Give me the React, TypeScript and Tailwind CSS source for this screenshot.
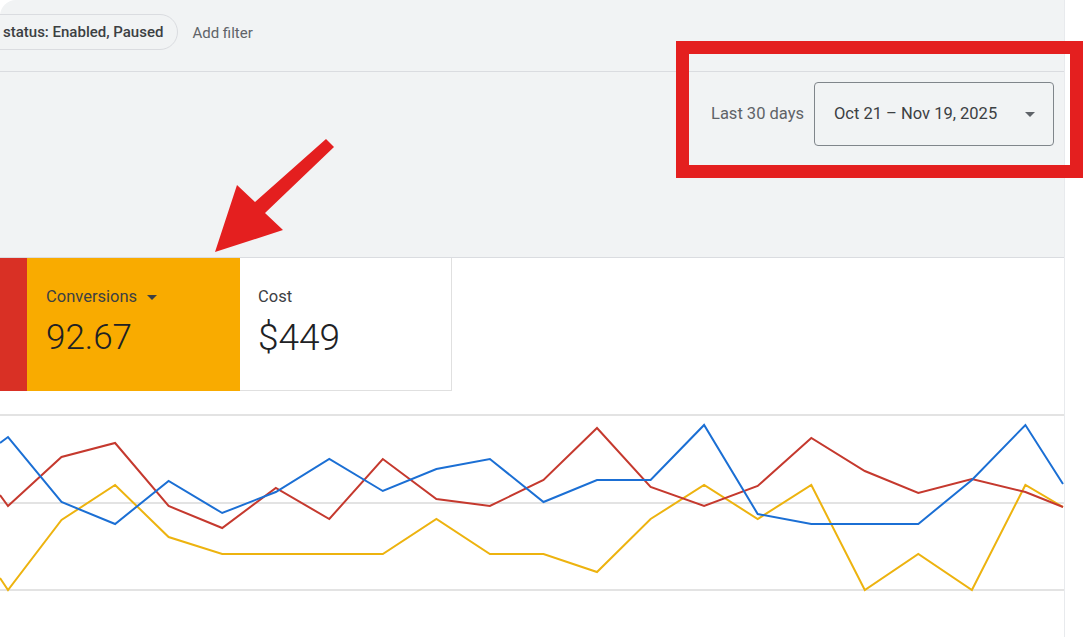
import React from "react";

const blue = [437, 502, 524, 481, 513, 492, 459, 491, 469, 459, 502, 480, 480, 425, 514, 524, 524, 524, 480, 425];
const red = [506, 457, 443, 506, 528, 488, 519, 459, 499, 506, 480, 428, 487, 506, 486, 438, 471, 493, 479, 492];
const yellow = [590, 520, 485, 537, 554, 554, 554, 554, 519, 554, 554, 572, 519, 485, 519, 485, 590, 554, 590, 485];

// chart svg starts at y=391 on the page
const TOP = 391;

const toPoints = (vals: number[], start: number, end: number) => {
   const pts = [`0,${start - TOP}`];
   vals.forEach((v, i) => pts.push(`${(8 + 53.55 * i).toFixed(1)},${v - TOP}`));
   pts.push(`1063,${end - TOP}`);
   return pts.join(" ");
};

const Caret = ({ className }: { className?: string }) => (
   <svg width="10" height="5" viewBox="0 0 10 5" className={className}>
      <path d="M0 0 L10 0 L5 5 Z" fill="currentColor" />
   </svg>
);

const App = () => {
   return (
      <div
         className="relative w-[1083px] h-[637px] overflow-hidden bg-white flex"
         style={{ fontFamily: "Roboto, 'Liberation Sans', sans-serif" }}
      >
         <div className="w-[1065px] h-full border-r border-[#e8eaed] flex flex-col">
            {/* toolbar area */}
            <div className="h-[258px] bg-[#f1f3f4] rounded-tl-2xl border-b border-[#dadce0] flex flex-col">
               <div className="h-[72px] border-b border-[#dadce0] flex items-start pt-[14px]">
                  <div className="h-[36px] -ml-5 pl-[22px] pr-[14px] rounded-full border border-[#dadce0] flex items-center text-[15px] font-medium text-[#3c4043]">
                     status: Enabled, Paused
                  </div>
                  <span className="ml-[14px] mt-[8px] text-[15px] text-[#5f6368]">Add filter</span>
               </div>
               <div className="flex justify-end items-center pt-[10px] pr-[10px] gap-[10px]">
                  <span className="text-[16.5px] text-[#5f6368]">Last 30 days</span>
                  <div className="w-[240px] h-[64px] border border-[#80868b] rounded-[4px] flex items-center justify-between pl-[19px] pr-[18px] text-[16.5px] text-[#3c4043]">
                     <span>Oct 21 – Nov 19, 2025</span>
                     <Caret className="text-[#5f6368]" />
                  </div>
               </div>
            </div>

            {/* scorecards */}
            <div className="flex h-[133px]">
               <div className="w-[27px] bg-[#d93025]" />
               <div className="w-[213px] bg-[#f9ab00] pl-[19px] pt-[27px]">
                  <div className="flex items-center gap-[10px] text-[16.5px] leading-[24px] text-[#3c4043]">
                     Conversions
                     <Caret className="text-[#3c4043]" />
                  </div>
                  <div className="mt-[9px] text-[35px] leading-[40px] font-light text-[#202124]">92.67</div>
               </div>
               <div className="w-[212px] bg-white border-r border-b border-[#e0e0e0] pl-[18px] pt-[27px]">
                  <div className="text-[16.5px] leading-[24px] text-[#3c4043]">Cost</div>
                  <div className="mt-[9px] text-[37px] leading-[40px] font-light text-[#202124]">$449</div>
               </div>
            </div>

            {/* chart */}
            <svg width="1064" height="246" viewBox="0 0 1064 246" className="block">
               {[415, 503, 590].map((y) => (
                  <line key={y} x1="0" x2="1064" y1={y - TOP} y2={y - TOP} stroke="#e3e3e3" strokeWidth="2" />
               ))}
               <polyline points={toPoints(yellow, 578, 507)} fill="none" stroke="#edb30f" strokeWidth="2" />
               <polyline points={toPoints(red, 495, 507)} fill="none" stroke="#c5392e" strokeWidth="2" />
               <polyline points={toPoints(blue, 443, 484)} fill="none" stroke="#1b6fd4" strokeWidth="2" />
            </svg>
         </div>

         {/* annotation: red box */}
         <div className="absolute left-[676px] top-[41px] w-[407px] h-[137px] border-[13px] border-[#e41f1f]" />

         {/* annotation: arrow */}
         <svg className="absolute left-0 top-0" width="1083" height="637" viewBox="0 0 1083 637">
            <polygon
               points="326,139 334,147 265,213 283,230 215,252 237,185 255,202"
               fill="#e41f1f"
            />
         </svg>
      </div>
   );
};

export default App;
